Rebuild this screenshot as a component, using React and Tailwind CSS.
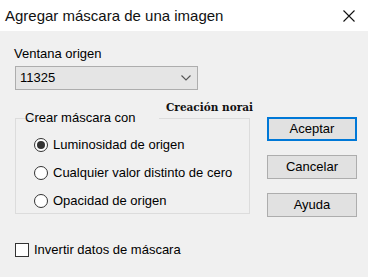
import React from 'react';

const Radio = ({ checked, label }) => (
    <div className="flex items-center h-[20px]">
        <span className="w-[14px] h-[14px] -ml-[1px] rounded-full border border-[#333333] bg-white flex items-center justify-center shrink-0">
            {checked && <span className="w-[8px] h-[8px] rounded-full bg-[#333333]" />}
        </span>
        <span className="ml-[5px]">{label}</span>
    </div>
);

const Button = ({ label, primary }) => (
    <div
        className={
            'w-[90px] h-[24px] flex items-center justify-center bg-[#e1e1e1] ' +
            (primary ? 'border-2 border-[#0078d7]' : 'border border-[#adadad]')
        }
    >
        {label}
    </div>
);

export default function App() {
    return (
        <div
            className="w-[368px] h-[277px] bg-[#f0f0f0] text-[13px] leading-[16px] text-black relative overflow-hidden"
            style={{ fontFamily: '"Liberation Sans", Arial, sans-serif' }}
        >
            {/* title bar */}
            <div className="h-[31px] bg-white flex items-center justify-between pl-[5px] pr-[13px]">
                <span className="text-[15px] text-[#111]">Agregar máscara de una imagen</span>
                <svg width="12" height="12" viewBox="0 0 12 12" className="mt-[1px]">
                    <path d="M0.5 0.5 L11.5 11.5 M11.5 0.5 L0.5 11.5" stroke="#111" strokeWidth="1.1" />
                </svg>
            </div>

            <div className="flex">
                {/* left column */}
                <div className="w-[252px] pl-[14px]">
                    <div className="mt-[15px]">Ventana origen</div>
                    <div className="mt-[4px] ml-[1px] w-[183px] h-[24px] border border-[#adadad] bg-[#e5e5e5] flex items-center justify-between pl-[4px] pr-[6px]">
                        <span>11325</span>
                        <svg width="10" height="6" viewBox="0 0 10 6">
                            <path d="M0.5 0.5 L5 5 L9.5 0.5" stroke="#555" strokeWidth="1.1" fill="none" />
                        </svg>
                    </div>

                    <fieldset className="mt-[20px] ml-[1px] w-[235px] h-[104px] border border-[#dcdcdc] pl-[19px]">
                        <legend className="ml-[5px] px-[4px] -translate-x-[19px] relative">Crear máscara con</legend>
                        <div className="flex flex-col gap-[8px] mt-[9px]">
                            <Radio checked label="Luminosidad de origen" />
                            <Radio label="Cualquier valor distinto de cero" />
                            <Radio label="Opacidad de origen" />
                        </div>
                    </fieldset>

                    <div className="flex items-center mt-[28px] ml-[1px]">
                        <span className="w-[14px] h-[14px] border border-[#333333] bg-white shrink-0" />
                        <span className="ml-[5px]">Invertir datos de máscara</span>
                    </div>
                </div>

                {/* buttons */}
                <div className="flex flex-col pl-[15px] pt-[86px] gap-[14px]">
                    <Button primary label="Aceptar" />
                    <Button label="Cancelar" />
                    <Button label="Ayuda" />
                </div>
            </div>

            {/* watermark */}
            <div
                className="absolute left-[166px] top-[99px] text-[10.5px] font-bold text-[#111]"
                style={{ fontFamily: '"DejaVu Serif", serif' }}
            >
                Creación norai
            </div>
        </div>
    );
}
